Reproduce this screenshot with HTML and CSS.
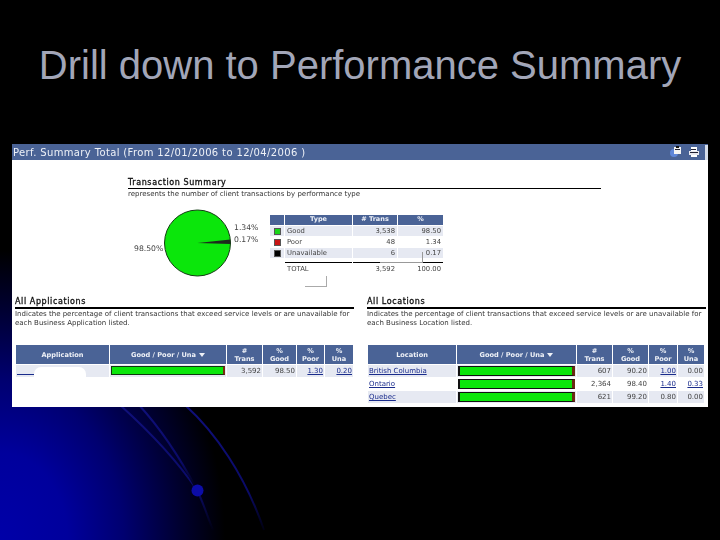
FILE: index.html
```html
<!DOCTYPE html>
<html lang="en">
<head>
<meta charset="utf-8">
<title>Drill down to Performance Summary</title>
<link rel="stylesheet" href="styles.css">
</head>
<body>
<div class="slide">
  <svg class="arcs" width="720" height="540" viewBox="0 0 720 540" aria-hidden="true">
    <defs>
      <linearGradient id="fade" x1="0" y1="0" x2="0" y2="1">
        <stop offset="0" stop-color="#10107c"/>
        <stop offset="0.7" stop-color="#0a0a66"/>
        <stop offset="1" stop-color="#000010"/>
      </linearGradient>
    </defs>
    <path d="M120 405C150 432 178 462 197 490C203 502 208 518 213 530" fill="none" stroke="url(#fade)" stroke-width="2"/>
    <path d="M139 405C160 428 180 458 196 488" fill="none" stroke="url(#fade)" stroke-width="2"/>
    <path d="M185 405C215 432 245 475 264 530" fill="none" stroke="url(#fade)" stroke-width="2"/>
    <circle cx="197.500" cy="490.500" r="6" fill="#0c0ca8"/>
  </svg>
  <h1 class="title">Drill down to Performance Summary</h1>
  <main class="shot">
    <header class="bar">
      <span>Perf. Summary Total (From 12/01/2006 to 12/04/2006 )</span>
      <span class="tools">
        <svg width="14" height="12" viewBox="0 0 14 12"><circle cx="5" cy="7" r="4" fill="#5f86d8"/><rect x="5" y="1" width="7" height="7" fill="#f4f4f4"/><rect x="7" y="0" width="3" height="2" fill="#111"/><rect x="6" y="3" width="5" height="1" fill="#223"/></svg>
        <svg width="10" height="10" viewBox="0 0 10 10"><rect x="2" y="0" width="6" height="4" fill="#fff"/><rect x="0" y="4" width="10" height="4" fill="#e8e8ee"/><rect x="2" y="2" width="5" height="1" fill="#223"/><rect x="1" y="5" width="8" height="1" fill="#223"/><rect x="2" y="8" width="6" height="2" fill="#fff"/></svg>
        <i class="stub"></i>
      </span>
    </header>

    <section class="summary">
      <h2 class="head">Transaction Summary</h2>
      <p class="desc">represents the number of client transactions by performance type</p>
      <div class="summary-row">
        <div class="pie-box">
          <svg class="pie" width="142" height="68" viewBox="0 0 142 68">
            <circle cx="69.500" cy="34" r="33" fill="#0be60b" stroke="#123d12" stroke-width="1"/>
            <path d="M69.500 34L102.300 30.500A33 33 0 0 1 102.500 35Z" fill="#1e2a1e"/>
            <text x="6" y="42" class="pie-label">98.50%</text>
            <text x="106" y="21" class="pie-label">1.34%</text>
            <text x="106" y="33" class="pie-label">0.17%</text>
          </svg>
        </div>
        <div class="type-table">
          <div class="th"></div><div class="th">Type</div><div class="th"># Trans</div><div class="th">%</div>
          <div class="sw alt"><i class="green"></i></div><div class="td alt">Good</div><div class="td num alt">3,538</div><div class="td num alt">98.50</div>
          <div class="sw"><i class="red"></i></div><div class="td">Poor</div><div class="td num">48</div><div class="td num">1.34</div>
          <div class="sw alt"><i class="black"></i></div><div class="td alt">Unavailable</div><div class="td num alt">6</div><div class="td num alt">0.17</div>
          <div></div><div class="td total">TOTAL</div><div class="td num total">3,592</div><div class="td num total">100.00</div>
        </div>
      </div>
    </section>

    <div class="lists">
      <section class="list">
        <h2 class="head">All Applications</h2>
        <p class="desc">Indicates the percentage of client transactions that exceed service levels or are unavailable for each Business Application listed.</p>
        <div class="data apps">
          <div class="th">Application</div><div class="th">Good / Poor / Una <b class="tri"></b></div><div class="th">#<br>Trans</div><div class="th">%<br>Good</div><div class="th">%<br>Poor</div><div class="th">%<br>Una</div>
          <div class="td alt"><a href="#">&nbsp;&nbsp;&nbsp;&nbsp;&nbsp;&nbsp;&nbsp;&nbsp;&nbsp;</a></div><div class="td alt"><div class="meter"><i></i></div></div><div class="td num alt">3,592</div><div class="td num alt">98.50</div><div class="td num alt"><a href="#">1.30</a></div><div class="td num alt"><a href="#">0.20</a></div>
        </div>
      </section>
      <section class="list">
        <h2 class="head">All Locations</h2>
        <p class="desc">Indicates the percentage of client transactions that exceed service levels or are unavailable for each Business Location listed.</p>
        <div class="data locs">
          <div class="th">Location</div><div class="th">Good / Poor / Una <b class="tri"></b></div><div class="th">#<br>Trans</div><div class="th">%<br>Good</div><div class="th">%<br>Poor</div><div class="th">%<br>Una</div>
          <div class="td alt"><a href="#">British Columbia</a></div><div class="td alt"><div class="meter tall"><i></i></div></div><div class="td num alt">607</div><div class="td num alt">90.20</div><div class="td num alt"><a href="#">1.00</a></div><div class="td num alt">0.00</div>
          <div class="td"><a href="#">Ontario</a></div><div class="td"><div class="meter tall"><i></i></div></div><div class="td num">2,364</div><div class="td num">98.40</div><div class="td num"><a href="#">1.40</a></div><div class="td num"><a href="#">0.33</a></div>
          <div class="td alt"><a href="#">Quebec</a></div><div class="td alt"><div class="meter tall"><i></i></div></div><div class="td num alt">621</div><div class="td num alt">99.20</div><div class="td num alt">0.80</div><div class="td num alt">0.00</div>
        </div>
      </section>
    </div>
    <div class="smudge"></div>
    <div class="popup"></div>
    <div class="popup small"></div>
  </main>
</div>
</body>
</html>
```
FILE: styles.css
```css
* { box-sizing: border-box; }
html, body { margin: 0; padding: 0; background: #000; }
.slide {
  position: relative;
  width: 720px;
  height: 540px;
  overflow: hidden;
  display: flex;
  flex-direction: column;
  background:
    radial-gradient(ellipse 225px 290px at 0 540px, #0000a8 0%, #00009c 30%, #000070 55%, #000030 80%, #000 100%),
    #000;
  font-family: "DejaVu Sans", sans-serif;
}
.arcs { position: absolute; left: 0; top: 0; }
.title {
  position: relative;
  margin: 0;
  height: 144px;
  padding-top: 43px;
  text-align: center;
  white-space: nowrap;
  font: 400 40px/44px "Liberation Sans", Arial, sans-serif;
  color: #a2a6b8;
}
.shot {
  position: relative;
  width: 696px;
  height: 263px;
  margin-left: 12px;
  background: #fff;
  color: #333;
  font-size: 6px;
  line-height: 8px;
  filter: blur(0.35px);
}
.bar {
  height: 16px;
  padding-left: 1px;
  background: #4a6396;
  color: #eef1f7;
  font-size: 10px;
  line-height: 15px;
  letter-spacing: 0.36px;
  display: flex;
  justify-content: space-between;
  align-items: center;
}
.tools { display: flex; align-items: center; gap: 6px; }
.stub { width: 3px; height: 15px; background: #d7deea; }
.summary { width: 473px; margin: 18px 0 0 116px; }
.head {
  margin: 0;
  font-size: 8px;
  line-height: 9px;
  font-weight: 400;
  letter-spacing: 0.6px;
  color: #111;
  -webkit-text-stroke: 0.3px #111;
  border-bottom: 1px solid #000;
  padding-bottom: 1px;
}
.list .head { border-bottom-width: 2px; }
.desc { margin: 1px 0 0; color: #333; }
.summary .desc { font-size: 7px; white-space: nowrap; }
.summary-row { display: flex; align-items: flex-start; margin-top: 7px; }
.pie-box { width: 142px; margin-top: 4px; height: 68px; }
.pie-label { font-family: "DejaVu Sans", sans-serif; font-size: 7.700px; fill: #444; }
.type-table {
  display: grid;
  grid-template-columns: 14px 67px 44px 45px;
  grid-auto-rows: 10px;
  column-gap: 1px;
  row-gap: 1px;
  margin-top: 10px;
  width: 173px;
  font-size: 6.800px;
}
.th {
  background: #4a6396;
  color: #eef1f7;
  font-weight: 700;
  text-align: center;
  font-size: 6.500px;
}
.td { padding: 1px 2px 0; white-space: nowrap; color: #444; }
.alt { background: #e6e9f2; }
.num { text-align: right; }
.total { border-top: 1px solid #000; height: 12px; margin-top: 3px; padding-top: 2px; }
.sw { display: flex; align-items: center; justify-content: center; }
.sw i { width: 7px; height: 7px; border: 1px solid #555; }
.green { background: #19d619; }
.red { background: #c81414; }
.black { background: #000; }
.lists {
  position: absolute;
  left: 3px;
  top: 153px;
  display: grid;
  grid-template-columns: 339px 339px;
  column-gap: 13px;
}
.list .desc { height: 24px; font-size: 7px; line-height: 9px; margin-bottom: 11px; margin-top: 1px; }
.data {
  display: grid;
  grid-template-rows: 19px;
  grid-auto-rows: 12px;
  column-gap: 1px;
  row-gap: 1px;
  margin-left: 1px;
}
.data .th { font-size: 6.600px; line-height: 8px; padding-top: 2px; height: 19px; }
.data > :nth-child(-n+6) { grid-row: 1; }
.apps { grid-template-columns: 93px 116px 35px 33px 27px 28px; }
.locs { grid-template-columns: 88px 119px 35px 35px 28px 26px; }
.data .th:nth-child(-n+2) { display: flex; align-items: center; justify-content: center; gap: 3px; padding-top: 0; }
.tri { width: 0; height: 0; border: 3px solid transparent; border-top: 4px solid #eef1f7; border-bottom: 0; }
.data a { color: #1a2c8c; text-decoration: underline; }
.data .td { padding: 2px 1px 0 1px; line-height: 8px; font-size: 7px; }
.data .td:nth-child(6n+2) { padding: 1px 1px 0; }
.meter {
  height: 9px;
  background: #0be60b;
  border: 1px solid #10350f;
  border-right: 2px solid #7a2a10;
}
.meter i { display: block; }
.meter.tall { height: 10px; border-left: 2px solid #111; border-top: 1px solid #111; border-bottom: 1px solid #111; border-right: 3px solid #6a2a12; }
.smudge {
  position: absolute;
  left: 22px;
  top: 223px;
  width: 52px;
  height: 10px;
  background: #fff;
  border-radius: 7px 7px 0 0;
}
.popup {
  position: absolute;
  left: 293px;
  top: 132px;
  width: 22px;
  height: 11px;
  border-right: 1px solid #aaa;
  border-bottom: 1px solid #aaa;
}
.popup.small { left: 368px; top: 108px; width: 43px; height: 11px; border-color: #999; }
```
